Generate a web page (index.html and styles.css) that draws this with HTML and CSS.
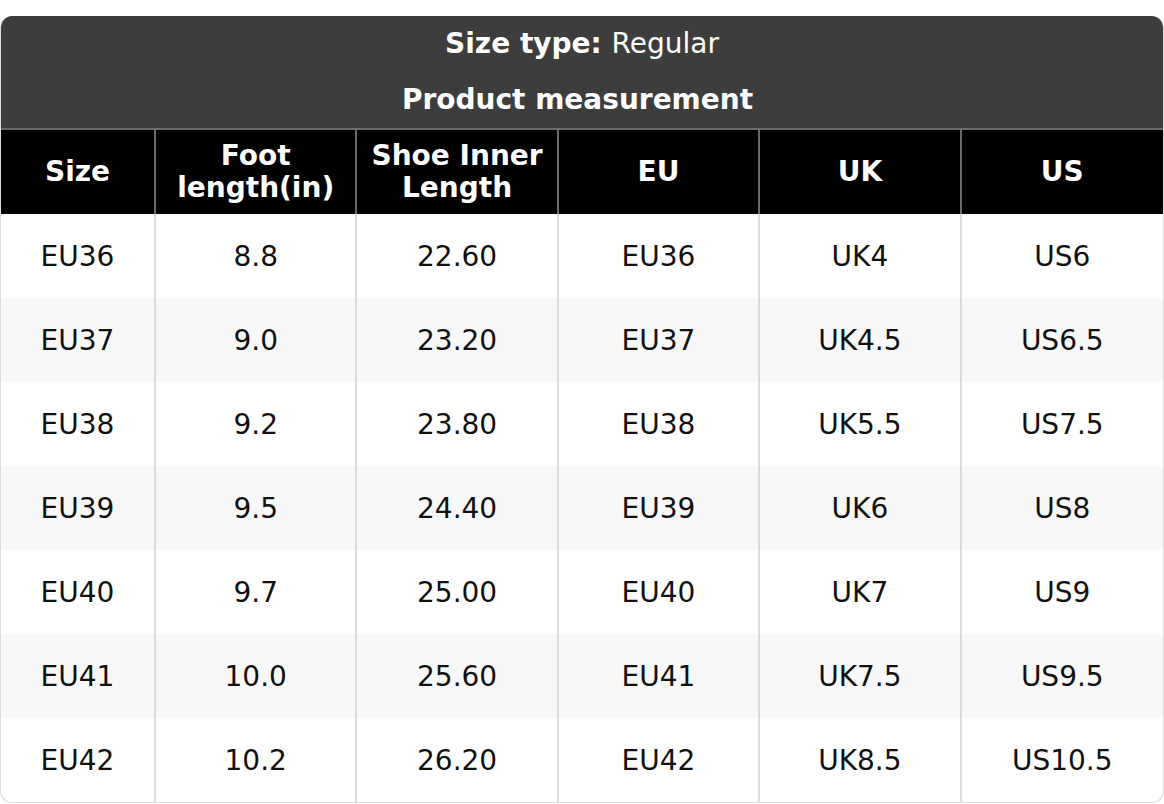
FILE: index.html
```html
<!DOCTYPE html>
<html lang="en">
<head>
<meta charset="utf-8">
<title>Size chart</title>
<link rel="stylesheet" href="styles.css">
</head>
<body>
<div class="page">
  <div class="chart">
    <table class="size-table">
      <colgroup>
        <col class="col-first">
        <col class="col">
        <col class="col">
        <col class="col">
        <col class="col">
        <col class="col">
      </colgroup>
      <thead>
        <tr class="title-row">
          <th colspan="6"><b>Size type:</b> <span class="regular">Regular</span></th>
        </tr>
        <tr class="title-row">
          <th colspan="6" class="subtitle">Product measurement</th>
        </tr>
        <tr class="head-row">
          <th>Size</th>
          <th>Foot<br>length(in)</th>
          <th>Shoe Inner<br>Length</th>
          <th>EU</th>
          <th>UK</th>
          <th>US</th>
        </tr>
      </thead>
      <tbody>
        <tr><td>EU36</td><td>8.8</td><td>22.60</td><td>EU36</td><td>UK4</td><td>US6</td></tr>
        <tr><td>EU37</td><td>9.0</td><td>23.20</td><td>EU37</td><td>UK4.5</td><td>US6.5</td></tr>
        <tr><td>EU38</td><td>9.2</td><td>23.80</td><td>EU38</td><td>UK5.5</td><td>US7.5</td></tr>
        <tr><td>EU39</td><td>9.5</td><td>24.40</td><td>EU39</td><td>UK6</td><td>US8</td></tr>
        <tr><td>EU40</td><td>9.7</td><td>25.00</td><td>EU40</td><td>UK7</td><td>US9</td></tr>
        <tr><td>EU41</td><td>10.0</td><td>25.60</td><td>EU41</td><td>UK7.5</td><td>US9.5</td></tr>
        <tr><td>EU42</td><td>10.2</td><td>26.20</td><td>EU42</td><td>UK8.5</td><td>US10.5</td></tr>
      </tbody>
    </table>
  </div>
</div>
</body>
</html>
```

FILE: styles.css
```css
html, body {
  margin: 0;
  padding: 0;
  background: #ffffff;
}

.page {
  padding-top: 16px;
  font-family: "DejaVu Sans", "Liberation Sans", sans-serif;
}

.chart {
  width: 1164px;
  box-sizing: border-box;
  border-radius: 12px;
  overflow: hidden;
  border: 1px solid #dcdcdc;
  border-top: none;
}

.size-table {
  width: 100%;
  table-layout: fixed;
  border-collapse: separate;
  border-spacing: 0;
  font-size: 28px;
  line-height: 32px;
  text-align: center;
  color: #111111;
}

.col-first {
  width: 155px;
}

.title-row th {
  background: #3d3d3d;
  color: #ffffff;
  height: 56px;
  padding: 0;
  font-weight: bold;
  box-sizing: border-box;
}

.title-row .subtitle {
  padding-right: 9px;
}

.title-row .regular {
  font-weight: normal;
}

.head-row th {
  background: #000000;
  color: #ffffff;
  font-weight: bold;
  height: 86px;
  padding: 0;
  box-sizing: border-box;
  border-top: 2px solid #6a6a6a;
  border-right: 2px solid #6a6a6a;
}

.head-row th:last-child {
  border-right: none;
}

.size-table td {
  height: 84px;
  padding: 2px 0 0 0;
  box-sizing: border-box;
  border-right: 2px solid #dddddd;
  font-weight: normal;
}

.size-table td:last-child {
  border-right: none;
}

.size-table tbody tr:nth-child(even) td {
  background: #f8f8f8;
}
```
